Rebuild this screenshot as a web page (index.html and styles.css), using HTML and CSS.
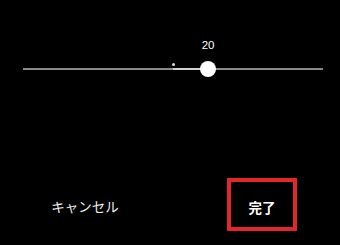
FILE: index.html
```
<!DOCTYPE html>
<html lang="ja">
<head>
  <meta charset="UTF-8" />
  <title>スライダー</title>
  <link rel="stylesheet" href="styles.css">
</head>
<body>
  <div class="panel">
    <div class="slider">
      <div class="track"></div>
      <div class="track-fill" style="left: 50%; width: 11.7%;"></div>
      <div class="dot"></div>
      <div class="thumb" style="left: 61.7%;">
        <span class="value">20</span>
      </div>
    </div>

    <div class="actions">
      <button class="btn btn-cancel">キャンセル</button>
      <button class="btn btn-done">完了</button>
    </div>
  </div>
</body>
</html>
```
FILE: styles.css
```
body {
  margin: 0;
  background-color: #000;
  color: #fff;
  font-family: "Noto Sans CJK JP", "Noto Sans", sans-serif;
}
.panel {
  width: 340px;
  height: 245px;
  display: flex;
  flex-direction: column;
}
.slider {
  position: relative;
  margin: 61px 17px 0 23px;
  height: 16px;
}
.track {
  position: absolute;
  left: 0;
  right: 0;
  top: 7px;
  height: 2px;
  background-color: #8a8a8a;
}
.track-fill {
  position: absolute;
  top: 7px;
  height: 2px;
  background-color: #d0d0d0;
}
.dot {
  position: absolute;
  left: 50%;
  top: 2px;
  width: 3px;
  height: 3px;
  margin-left: -1.5px;
  border-radius: 50%;
  background-color: #ddd;
}
.thumb {
  position: absolute;
  top: 0;
  width: 16px;
  height: 16px;
  margin-left: -8px;
  border-radius: 50%;
  background-color: #fff;
}
.value {
  position: absolute;
  left: 50%;
  bottom: 100%;
  margin-bottom: 10px;
  transform: translateX(-50%);
  font-family: "Liberation Sans", Arial, sans-serif;
  font-size: 11.5px;
  line-height: 12px;
  color: #fff;
}
.actions {
  display: flex;
  margin-top: 101px;
  padding-left: 25px;
}
.btn {
  background: none;
  border: none;
  color: #f0f0f0;
  font-family: inherit;
  font-size: 13.5px;
  height: 53px;
  padding: 0;
  cursor: pointer;
}
.btn-cancel {
  width: 120px;
  padding-top: 3px;
}
.btn-done {
  width: 70px;
  margin-left: 82px;
  border: 4px solid #e2262c;
  box-sizing: border-box;
  font-weight: bold;
  color: #fff;
  padding-top: 4px;
}
```
